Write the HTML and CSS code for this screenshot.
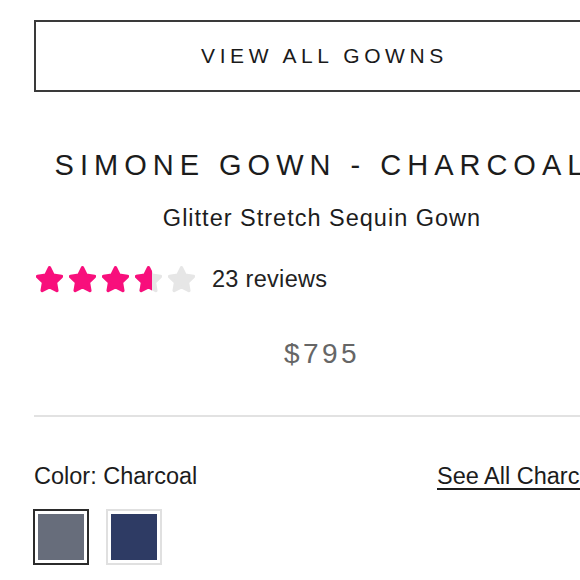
FILE: index.html
```html
<!DOCTYPE html>
<html lang="en">
<head>
<meta charset="utf-8">
<title>Simone Gown - Charcoal</title>
<link rel="stylesheet" href="styles.css">
</head>
<body>
<div class="viewport">
  <main class="page">
    <a class="btn-outline" href="#">VIEW ALL GOWNS</a>

    <h1 class="title">SIMONE GOWN - CHARCOAL</h1>
    <p class="subtitle">Glitter Stretch Sequin Gown</p>

    <div class="rating">
      <div class="stars">
        <span class="star"><svg viewBox="1.4 1.4 21.2 20.9"><path class="on" d="M12 2.6l2.9 5.9 6.5.95-4.7 4.6 1.1 6.5L12 17.5l-5.8 3.05 1.1-6.5-4.7-4.6 6.5-.95z"/></svg></span>
        <span class="star"><svg viewBox="1.4 1.4 21.2 20.9"><path class="on" d="M12 2.6l2.9 5.9 6.5.95-4.7 4.6 1.1 6.5L12 17.5l-5.8 3.05 1.1-6.5-4.7-4.6 6.5-.95z"/></svg></span>
        <span class="star"><svg viewBox="1.4 1.4 21.2 20.9"><path class="on" d="M12 2.6l2.9 5.9 6.5.95-4.7 4.6 1.1 6.5L12 17.5l-5.8 3.05 1.1-6.5-4.7-4.6 6.5-.95z"/></svg></span>
        <span class="star">
          <svg viewBox="1.4 1.4 21.2 20.9"><path class="off" d="M12 2.6l2.9 5.9 6.5.95-4.7 4.6 1.1 6.5L12 17.5l-5.8 3.05 1.1-6.5-4.7-4.6 6.5-.95z"/></svg>
          <span class="star-fill" style="width:62%"><svg viewBox="1.4 1.4 21.2 20.9"><path class="on" d="M12 2.6l2.9 5.9 6.5.95-4.7 4.6 1.1 6.5L12 17.5l-5.8 3.05 1.1-6.5-4.7-4.6 6.5-.95z"/></svg></span>
        </span>
        <span class="star"><svg viewBox="1.4 1.4 21.2 20.9"><path class="off" d="M12 2.6l2.9 5.9 6.5.95-4.7 4.6 1.1 6.5L12 17.5l-5.8 3.05 1.1-6.5-4.7-4.6 6.5-.95z"/></svg></span>
      </div>
      <span class="reviews">23 reviews</span>
    </div>

    <p class="price">$795</p>

    <hr class="divider">

    <div class="color-row">
      <span class="color-label">Color: Charcoal</span>
      <a class="see-all" href="#">See All Charcoal Gowns</a>
    </div>

    <div class="swatches">
      <span class="swatch selected"><span class="chip charcoal"></span></span>
      <span class="swatch"><span class="chip navy"></span></span>
    </div>
  </main>
</div>
</body>
</html>
```

FILE: styles.css
```css
html, body {
  margin: 0;
  padding: 0;
  background: #fff;
}

body {
  font-family: "Liberation Sans", Arial, sans-serif;
  color: #1f1f1f;
}

.viewport {
  width: 100%;
  overflow: hidden;
}

.page {
  width: 576px;
  margin-left: 34px;
  padding-top: 20px;
  display: flex;
  flex-direction: column;
}

.btn-outline {
  display: flex;
  align-items: center;
  justify-content: center;
  height: 68px;
  border: 2px solid #3a3a3a;
  color: #1a1a1a;
  text-decoration: none;
  font-size: 21px;
  letter-spacing: 4.6px;
  padding-left: 5px;
}

.title {
  margin: 55px 0 0;
  text-align: center;
  font-weight: normal;
  font-size: 29px;
  line-height: 36px;
  letter-spacing: 6px;
  color: #1c1c1c;
  white-space: nowrap;
}

.subtitle {
  margin: 20px 0 0;
  text-align: center;
  font-size: 23.5px;
  line-height: 30px;
  letter-spacing: 1px;
  color: #1c1c1c;
}

.rating {
  margin-top: 33px;
  display: flex;
  align-items: center;
  gap: 17px;
}

.stars {
  display: flex;
  gap: 6px;
  padding-left: 2px;
}

.star {
  position: relative;
  width: 27px;
  height: 27px;
  display: block;
}

.star svg {
  display: block;
  width: 27px;
  height: 27px;
}

.star-fill {
  position: absolute;
  left: 0;
  top: 0;
  height: 27px;
  overflow: hidden;
}

.star path {
  stroke-width: 2.6;
  stroke-linejoin: round;
}

.star .on {
  fill: #f80f7c;
  stroke: #f80f7c;
}

.star .off {
  fill: #e6e6e6;
  stroke: #e6e6e6;
}

.reviews {
  font-size: 23.5px;
  letter-spacing: 0.3px;
  color: #222;
}

.price {
  margin: 45px 0 0;
  text-align: center;
  font-size: 28px;
  line-height: 32px;
  letter-spacing: 3.4px;
  color: #666;
}

.divider {
  margin: 45px 0 0;
  border: 0;
  border-top: 2px solid #e2e2e2;
  width: 100%;
}

.color-row {
  margin-top: 45px;
  display: grid;
  grid-template-columns: 403px auto;
  align-items: baseline;
  font-size: 23.5px;
  line-height: 28px;
  color: #1c1c1c;
  white-space: nowrap;
}

.see-all {
  color: #1c1c1c;
  text-decoration: underline;
  text-decoration-thickness: 2px;
  text-underline-offset: 4px;
}

.swatches {
  margin-top: 19px;
  margin-left: -1px;
  display: flex;
  gap: 17px;
}

.swatch {
  width: 46px;
  height: 46px;
  padding: 3px;
  border: 2px solid #e0e0e0;
  display: block;
}

.swatch.selected {
  border-color: #2b2b2b;
}

.chip {
  display: block;
  width: 100%;
  height: 100%;
}

.charcoal {
  background: #676d7b;
}

.navy {
  background: #2e3b64;
}
```
